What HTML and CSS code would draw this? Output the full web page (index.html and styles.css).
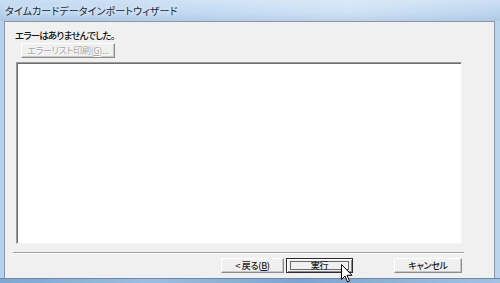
FILE: index.html
```html
<!DOCTYPE html>
<html lang="ja">
<head>
<meta charset="utf-8">
<link rel="stylesheet" href="styles.css">
</head>
<body>
<div class="window">
  <div class="titlebar">
    <span class="title">タイムカードデータインポートウィザード</span>
  </div>
  <div class="frame-mid">
    <div class="client">
      <p class="msg">エラーはありませんでした。</p>
      <button class="btn print" disabled>エラーリスト印刷(<u>G</u>)...</button>
      <div class="listbox"></div>
      <div class="sep"></div>
      <div class="buttons">
        <button class="btn back">&lt;&nbsp;戻る(<u>B</u>)</button>
        <button class="btn exec"><span class="focus">実行</span></button>
        <button class="btn cancel">キャンセル</button>
      </div>
    </div>
  </div>
  <div class="frame-bottom"></div>
  <svg class="cursor" width="12" height="20" viewBox="0 0 12 20">
    <path d="M0.5 0.5 L0.5 15.5 L4 12 L6.5 18 L8.5 17 L6 11.3 L11 11.3 Z" fill="#fff" stroke="#000" stroke-width="1" stroke-linejoin="round"/>
  </svg>
</div>
</body>
</html>
```

FILE: styles.css
```css
* { box-sizing: border-box; }
html, body { margin: 0; padding: 0; }
body {
  width: 500px;
  height: 283px;
  overflow: hidden;
  font-family: "Noto Sans CJK JP", "Noto Sans", sans-serif;
  font-feature-settings: "palt";
}
.window {
  position: relative;
  width: 500px;
  height: 283px;
  display: flex;
  flex-direction: column;
  background: linear-gradient(90deg, #b7d2ee 0%, #c3daf2 40%, #cfe2f6 70%, #bcd5ee 100%);
}
.titlebar {
  height: 21px;
  flex: none;
  display: flex;
  align-items: center;
  padding-left: 5px;
  background:
    linear-gradient(180deg, rgba(255,255,255,0.25) 0%, rgba(255,255,255,0) 60%, rgba(120,140,170,0.18) 100%);
}
.title {
  font-size: 10px;
  color: #1e2633;
  letter-spacing: 0.1px;
  text-shadow: 0 0 4px #e8f2fb, 0 0 6px #e8f2fb;
  margin-top: -1px;
}
.frame-mid {
  flex: 1;
  display: flex;
  padding: 0 5px 0 4px;
}
.client {
  flex: 1;
  background: #f0f0f0;
  border: 1px solid #8a97a8;
  border-bottom: none;
  display: flex;
  flex-direction: column;
}
.frame-bottom {
  flex: none;
  height: 5px;
  background: linear-gradient(90deg, #7fa6cf, #9dbde0 30%, #7ea3cc 60%, #a3c2e2 100%);
  border-top: 1px solid #6b88aa;
}
.msg {
  margin: 7px 0 0 10px;
  font-size: 9.5px;
  line-height: 12px;
  color: #111;
  letter-spacing: -0.8px;
  font-weight: 500;
}
.btn {
  font-family: inherit;
  font-feature-settings: "palt";
  font-size: 9px;
  line-height: 11px;
  padding: 0;
  margin: 0;
  background: #f0f0f0;
  color: #1a1a1a;
  border: 1px solid;
  border-color: #ffffff #8c8c8c #8c8c8c #ffffff;
  box-shadow: inset -1px -1px 0 #c8c8c8;
  height: 15px;
  letter-spacing: -0.3px;
  font-weight: 500;
}
.btn u { text-decoration: underline; }
.print {
  margin: 2px 0 0 16px;
  width: 94px;
  color: #a6a6a6;
  text-shadow: 1px 1px 0 #ffffff;
  font-weight: 400;
}
.listbox {
  margin: 4px 0 0 11px;
  width: 446px;
  height: 182px;
  background: #ffffff;
  border-top: 1px solid #9a9a9a;
  border-left: 1px solid #9a9a9a;
  border-right: 1px solid #f6f6f6;
  border-bottom: 1px solid #f6f6f6;
  box-shadow: inset 1px 1px 0 #6e6e6e;
}
.sep {
  margin: 8px 0 0 8px;
  width: 451px;
  height: 2px;
  border-top: 1px solid #a0a0a0;
  border-bottom: 1px solid #ffffff;
}
.buttons {
  margin: 4px 0 0 216px;
  display: flex;
  gap: 2px;
}
.back { width: 63px; }
.exec {
  width: 67px;
  border: 1px solid #2b2b2b;
  box-shadow: inset 1px 1px 0 #ffffff, inset -1px -1px 0 #8c8c8c;
  padding: 2px 3px;
  display: flex;
}
.exec .focus {
  flex: 1;
  border: 1px solid #6a6a6a;
  line-height: 7px;
  font-size: 9px;
  display: flex;
  align-items: center;
  justify-content: center;
}
.cancel {
  width: 68px;
  margin-left: 39px;
}
.cursor {
  position: absolute;
  left: 341px;
  top: 264px;
}
```
